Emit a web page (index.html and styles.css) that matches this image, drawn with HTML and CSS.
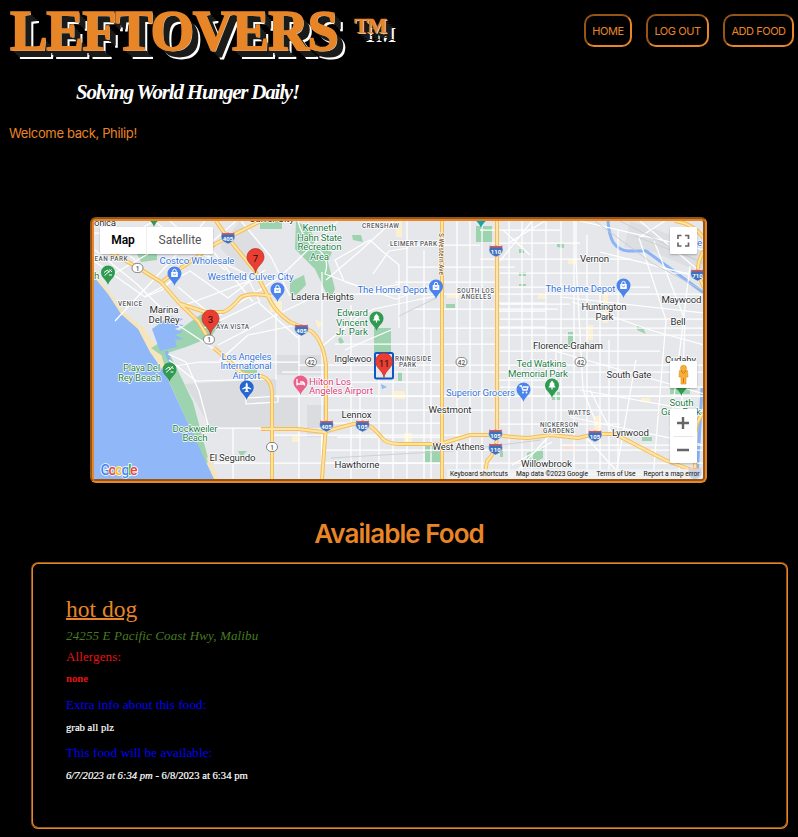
FILE: index.html
```html
<!DOCTYPE html>
<html lang="en">
<head>
<meta charset="utf-8">
<title>Leftovers</title>
<link rel="stylesheet" href="styles.css">
</head>
<body>
<header class="header">
  <div class="brand">
    <h1 class="logo">LEFTOVERS <span class="tm">TM</span></h1>
    <p class="tagline">Solving World Hunger Daily!</p>
  </div>
  <nav class="nav">
    <a class="nav-button home">HOME</a>
    <a class="nav-button logout">LOG OUT</a>
    <a class="nav-button add">ADD FOOD</a>
  </nav>
</header>
<p class="welcome">Welcome back, Philip!</p>

<section class="map">
<svg class="map-canvas" viewBox="94 221 610 258" width="610" height="258">
  <defs>
    <path id="pin" d="M0 0C-1.2-5-7-7.200-7-12.500A7 7 0 0 1 7-12.500C7-7.200 1.200-5 0 0Z"/>
    <g id="bag"><use href="#pin" fill="#4c84ee"/><rect x="-3.300" y="-14" width="6.600" height="5" rx=".6" fill="#fff"/><path d="M-1.700-14v-1a1.700 1.700 0 0 1 3.400 0v1" fill="none" stroke="#fff"/><path d="M-1.300-12.500a1.300 1.300 0 0 0 2.600 0" fill="none" stroke="#4c84ee" stroke-width=".8"/></g>
    <g id="tree"><use href="#pin" fill="#2f9b50"/><path d="M0-17.500l3 4h-1.300l2 3H.6v2H-.6v-2h-3.100l2-3H-3z" fill="#fff"/></g>
    <g id="beach"><use href="#pin" fill="#2f9b50"/><path d="M-4-12.500l3.500-2.500 1.500 2.500M-3.500-9.500l7-6M1-10h3M1.500-15.500l2.500 2.500" fill="none" stroke="#fff" stroke-width="1"/></g>
    <path id="marker" d="M0 0C-1-7-8.500-9.500-8.500-16A8.500 8.500 0 0 1 8.500-16C8.500-9.500 1-7 0 0Z" fill="#ea3e33" stroke="#b92d26" stroke-width=".7"/>
    <g id="shield"><path d="M-6-5h12q2 4 0 7Q4 4.500 0 6q-4-1.500-6-4-2-3 0-7z" fill="#3f70ba" stroke="#eef" stroke-width=".5"/><path d="M-6.300-5.400q3 1 6.300 0 3.300 1 6.300 0v2H-6.300z" fill="#d05a5c"/></g>
    <rect id="route" x="-5.500" y="-4.500" width="11" height="9" rx="4.500" fill="#fff" stroke="#777" stroke-width=".9"/>
  </defs>
  <rect x="94" y="221" width="610" height="258" fill="#e5e7ea"/>
  <path d="M185 384L276 379V398L298 398V428H211Z M307 405h18v32h-18z M275 355h50v20h-50z" fill="#dadce0"/>
  <path d="M630 221l74 25v28l-50-22-30-5z M240 221l25 30-20 26-25-30z" fill="#dcdee1"/>
  <path d="M94 271L108 289L126 314L145 329L160 353L175 378L201 439L219 479H94Z" fill="#f5e5bd"/>
  <path class="park" d="M151 348l20-12 36-26 14 12-10 15-25 10-25 8z M160 350l8 2 14 34 14 32 12 45-6-2-11-31-22-49z M296 221l14 8 8 18 14 5-4 10 7 27-5 12-15-32-20-20z M374 328l17 0v50h-17z M476 226h16v16h-16z M290 282l14-7 2 10-10 10-6-2z M260 221h22v8h-22z M135 250h22v10l-16 2z M425 445h17v18h-17z M527 453l16-6v11l-16 9z M557 244h7v4l-7-1z M519 249h5v4h-5z M519 272h7v4h-7z M519 284h7v2h-7z M446 304h9v4h-9z M568 332h5v15h-5z M637 325l6 3 3 6-9-4z M552 392h8v8h-8z M670 379h20v15h-20z M238 451h9l-6 6z M642 437h10v4h-10z M352 235h9l2 7-10-2z M338 339l3-2 3 5-4 3z M398 372h4v9h-4z M500 449h3v8h-3z M240 369h17v6h-17z"/>
  <path class="sand" d="M270 301h12v11h-12z M315 319l8 4-5 6z M568 259h8v5h-8z M538 295h8v4h-8z M603 293h5v30h-5z M588 325h5v15h-5z M394 391h11v8h-11z M641 398h9v4h-9z M594 416h7v15h-7z M447 295h12v3h-12z M292 436h7v6h-7z M404 433h8v13h-8z M396 219h6v18h-6z"/>
  <path d="M563 445h14v5h-14z" fill="#f7ded9"/>
  <path class="water" d="M94 277L108 294L121 314L138 329L150 352L166 375L181 408L198 445L214 479H94Z M152 329l18-13 13 3-8 5 9 1-9 4 8 3-8 3 9 4-9 1 2 7-17 4z M381 384l6 3-5 2z"/>
  <path class="park" d="M162 352l6-1 13 26 12 25 15 56-5-3-10-27-23-51z"/>
  <path class="river" d="M608 221Q609 235 613 242Q618 250 628 251L646 251L671 269L704 293M702 388L697 479M166 351l5 14"/>

  <g class="street">
    <path d="M94 233H102L135 260M94 261L145 297L162 290L200 252L236 221M111 247L154 221L195 251L245 273L260 302M115 273L160 247M144 297L190 271L228 298L265 270M158 314L196 301L260 277M170 221L225 270M205 221L170 262L115 321M178 287L215 318L280 277L338 221M204 328L258 302L298 338M218 345L268 319L320 294M95 250L137 284L178 325L235 363M241 221L271 257L290 296M197 230L222 263L253 302M219 361L248 335L292 326"/>
    <path d="M168 354L186 362L199 391L209 428H272M169 360L196 381L265 379M176 366L199 362H300M276 312V380M299 334V479M282 372H704M247 398l31-2v6l-32 2v-6M272 396H704M233 428V479M214 463H442M272 429h50v34"/>
    <path d="M322 272V479M351 305V479M379 378V479M407 221V479M424 250V479M457 221V479M470 221V479M482 221V479M509 221V479M522 221V479M532 221V479M546 221V479M561 221V479M574 221V479M587 235V479M600 260V479M618 230V479M639 238L666 320L653 479M654 241L685 320L679 479M690 266L670 430"/>
    <path d="M388 245H480M407 267H515M395 282H498M335 294H704M413 309H558M407 328H704M335 344H498M298 365H704M326 410H704M376 396H704M272 435H498M326 450H704M326 463H704M480 230H560M492 243H580M480 259H631M500 273H704M500 287H650M500 304H570M500 319H704M500 335H704M500 351H660M500 387H704M500 424H620M561 445H704M498 474H704"/>
    <path d="M298 221Q304 243 319 250Q330 260 325 274L344 281L396 299L442 282M326 280L360 251L393 221M344 281L335 260L370 240L382 251L399 265V328M373 274L389 251L408 248M391 330L370 339L345 350M320 348L358 317L374 309L436 296M345 282L370 290L400 284M500 261L532 221M510 242L545 221M503 230l27 25M576 221V260L583 390L595 420M561 297L704 313M572 302L650 330L704 345M600 252L704 278M580 221L704 250M640 221L704 275M638 238L665 221M548 349L704 394M580 390L704 412M570 417L704 445M614 437L590 390M584 435l40 44M550 435l-40 44M512 465l40-23"/>
    <path d="M498 303H545M498 311H545M498 327H545M337 382H442M326 423H442M337 437H442M360 394V463M393 380V479M431 328V479M556 348V430M609 340V479M636 360L615 479M498 380H545"/>
  </g>
  <g class="rail"><path d="M399 316L436 298M331 458l120-7 90-11M595 221l57 42 52 28M620 221l84 43M635 236l69 27"/></g>
  <g class="major-edge"><path id="roads" d="M101 247L137 267L161 282L180 304L198 321L210 341M214 348L235 366Q239 375 252 375Q272 374 272 394V479M181 304L205 312H223Q230 310 241 297Q250 292 271 296M163 281L215 244L261 221M216 221L228 238L255 271L271 302Q276 312 290 322L311 331Q323 340 326 365V425L322 479M261 429H298L323 432L353 424H364Q372 425 382 438Q387 444 400 444H440L470 435H498Q515 438 528 438L551 435L578 438L595 434H615L638 446L665 460L697 472M497 221V428Q498 451 487 461L484 479M442 221V479M675 221Q695 224 704 239M704 251Q697 261 698 274L704 288M704 413Q695 420 695 440V479"/></g>
  <use href="#roads" class="major"/>

  <g class="label place">
    <text x="94" y="226" textLength="22">onica</text><text x="249" y="222" textLength="45">Culver City</text>
    <text x="149.500" y="313" textLength="29">Marina</text><text x="148.500" y="323" textLength="31">Del Rey</text>
    <text x="291" y="300" textLength="63">Ladera Heights</text><text x="334.500" y="362" textLength="37">Inglewoo</text>
    <text x="341.500" y="417.500" textLength="30">Lennox</text><text x="428.500" y="412.500" textLength="43">Westmont</text><text x="432.500" y="450" textLength="52">West Athens</text>
    <text x="334.500" y="467.500" textLength="45">Hawthorne</text><text x="209.500" y="461" textLength="46">El Segundo</text>
    <text x="580" y="262" textLength="29">Vernon</text><text x="581.500" y="310" textLength="45">Huntington</text><text x="595.500" y="319.500" textLength="18">Park</text>
    <text x="661.500" y="303" textLength="40">Maywood</text><text x="670.500" y="324.500" textLength="15">Bell</text><text x="533" y="348.500" textLength="70">Florence-Graham</text>
    <text x="606.500" y="378" textLength="45">South Gate</text><text x="665" y="363" textLength="31">Cudahy</text><text x="612" y="435.500" textLength="37">Lynwood</text><text x="521" y="466.500" textLength="51">Willowbrook</text>
  </g>
  <g class="label park-name">
    <text x="302.500" y="231" textLength="34">Kenneth</text><text x="297" y="240.500" textLength="45">Hahn State</text><text x="297.500" y="250" textLength="44">Recreation</text><text x="310" y="259.500" textLength="19">Area</text>
    <text x="337" y="316" textLength="31">Edward</text><text x="336" y="325.500" textLength="32">Vincent</text><text x="336" y="334.500" textLength="32">Jr. Park</text>
    <text x="123" y="371" textLength="37">Playa Del</text><text x="118" y="380.500" textLength="43">Rey Beach</text><text x="172.500" y="432" textLength="45">Dockweiler</text><text x="182.500" y="441" textLength="25">Beach</text>
    <text x="516.500" y="367" textLength="50">Ted Watkins</text><text x="508" y="376.500" textLength="60">Memorial Park</text><text x="669.500" y="406" textLength="24">South</text><text x="661" y="415" textLength="40">Gate Park</text><text x="94" y="279">h</text>
  </g>
  <g class="label business">
    <text x="159.500" y="264" textLength="75">Costco Wholesale</text><text x="207.500" y="280" textLength="86">Westfield Culver City</text>
    <text x="357.500" y="293" textLength="70">The Home Depot</text><text x="545.500" y="291.500" textLength="70">The Home Depot</text><text x="446" y="396" textLength="69">Superior Grocers</text>
    <text x="221.500" y="360" textLength="50">Los Angeles</text><text x="220.500" y="369" textLength="51">International</text><text x="232.500" y="378.500" textLength="28">Airport</text><text x="697" y="246">el</text>
  </g>
  <g class="label hotel"><text x="309" y="384.500" textLength="42">Hilton Los</text><text x="309" y="394" textLength="64">Angeles Airport</text></g>
  <g class="label district">
    <text x="94.500" y="261" textLength="33">EAN PARK</text><text x="118" y="306" textLength="24">VENICE</text><text x="216" y="329" textLength="33">AYA VISTA</text>
    <text x="362" y="228" textLength="37">CRENSHAW</text><text x="390" y="246" textLength="47">LEIMERT PARK</text>
    <text x="457" y="293" textLength="37">SOUTH LOS</text><text x="461" y="299" textLength="30">ANGELES</text><text x="395" y="361" textLength="36">RNINGSIDE</text><text x="399" y="367" textLength="17">PARK</text>
    <text x="568" y="415" textLength="22">WATTS</text><text x="540" y="427" textLength="38">NICKERSON</text><text x="543" y="433" textLength="31">GARDENS</text>
    <text class="avenue" transform="translate(439 233) rotate(90)" textLength="42">S Western Ave</text>
  </g>

  <use href="#bag" x="174.500" y="286"/><use href="#bag" x="277.500" y="302"/><use href="#bag" x="436" y="299"/><use href="#bag" x="623.500" y="298"/>
  <use href="#pin" x="523.500" y="402" fill="#4c84ee"/><path d="M519.500 386h2l1.500 4h4l1-3h-5" fill="none" stroke="#fff" stroke-width="1.300"/><circle cx="523" cy="392.500" r=".9" fill="#fff"/><circle cx="526.500" cy="392.500" r=".9" fill="#fff"/>
  <use href="#tree" x="376.500" y="331"/><use href="#tree" x="552" y="398"/><use href="#tree" x="681.500" y="396"/>
  <use href="#beach" x="108" y="285"/><use href="#beach" x="169.500" y="382"/>
  <use href="#pin" x="154" y="227" fill="#2f9b50"/><use href="#pin" x="481" y="228" fill="#12a4af"/>
  <use href="#pin" x="246.700" y="400" fill="#2467d2"/><path d="M246.700 382.500l1 1.500v2.500l3.500 2v1l-3.500-1v2l1 1v.8l-2-.5-2 .5v-.8l1-1v-2l-3.500 1v-1l3.500-2V384z" fill="#fff"/>
  <use href="#pin" x="300.500" y="395" fill="#ec5f8c"/><path d="M297 379v6.500M297 384h7.500v1.500M300 382h2.500q1.500 0 1.500 1.500" fill="none" stroke="#fff" stroke-width="1.300"/>
  <g class="shields">
    <use href="#shield" x="228" y="238"/><text x="228" y="240.500">405</text><use href="#shield" x="301.500" y="330"/><text x="301.500" y="332.500">405</text>
    <use href="#shield" x="326.500" y="426"/><text x="326.500" y="428.500">405</text><use href="#shield" x="362.500" y="426"/><text x="362.500" y="428.500">105</text>
    <use href="#shield" x="496" y="251"/><text x="496" y="253.500">110</text><use href="#shield" x="495.500" y="435"/><text x="495.500" y="437.500">105</text><use href="#shield" x="495.500" y="449"/><text x="495.500" y="451.500">110</text>
    <use href="#shield" x="595" y="436"/><text x="595" y="438.500">105</text><use href="#shield" x="697.500" y="275"/><text x="697.500" y="277.500">710</text><use href="#shield" x="695" y="474"/>
  </g>
  <g class="routes">
    <use href="#route" x="137.500" y="268"/><text x="137.500" y="270.500">1</text><use href="#route" x="209" y="339.500"/><text x="209" y="342">1</text><use href="#route" x="272" y="447"/><text x="272" y="449.500">1</text>
    <use href="#route" x="311" y="362"/><text x="311" y="364.500">42</text><use href="#route" x="461.500" y="362"/><text x="461.500" y="364.500">42</text><use href="#route" x="580.500" y="362"/><text x="580.500" y="364.500">42</text>
  </g>
  <g class="markers">
    <use href="#marker" x="255.500" y="273"/><text x="255.500" y="262">7</text>
    <use href="#marker" x="210.500" y="334.500"/><text x="210.500" y="323">3</text>
    <rect x="375" y="353" width="18" height="25.500" rx="1.500" fill="#e5e7ea" stroke="#0b57c4" stroke-width="2"/>
    <use href="#marker" x="384" y="377.500"/><text x="384" y="366.500">11</text>
  </g>
  <text class="google" x="100.500" y="474.500" textLength="37"><tspan fill="#4285f4">G</tspan><tspan fill="#ea4335">o</tspan><tspan fill="#fbbc05">o</tspan><tspan fill="#4285f4">g</tspan><tspan fill="#34a853">l</tspan><tspan fill="#ea4335">e</tspan></text>
  <rect x="447" y="469" width="257" height="10" fill="#f2f3f4" opacity=".75"/>
  <g class="legal"><text x="450" y="476" textLength="58">Keyboard shortcuts</text><text x="516" y="476" textLength="72">Map data ©2023 Google</text><text x="596.500" y="476" textLength="39">Terms of Use</text><text x="643.500" y="476" textLength="56">Report a map error</text></g>
</svg>
  <div class="control map-type"><b>Map</b><span>Satellite</span></div>
  <div class="control fullscreen"><svg width="27" height="27"><path d="M8 12V8.500h3.500M15 8.500h3.500V12M18.500 15.500V19H15M11.500 19H8v-3.500" fill="none" stroke="#666" stroke-width="1.700"/></svg></div>
  <div class="control pegman"><svg width="27" height="27"><path d="M9.500 9.500h8l.5 6.500h-2v7h-5v-7H9z" fill="#f5b12f" stroke="#d8902b" stroke-width=".6"/><circle cx="13.500" cy="7.200" r="3" fill="#f5b12f" stroke="#d8902b" stroke-width=".6"/><path d="M11 10l2.500 2.500L16 10M13.500 17v5" fill="none" stroke="#e06e26"/></svg></div>
  <div class="control zoom"><svg width="27" height="54"><path d="M7 14h12M13 8v12M7 41h12" stroke="#666" stroke-width="2.400"/><path d="M3.500 27.500h20" stroke="#e6e6e6"/></svg></div>
</section>

<h2 class="section-title">Available Food</h2>
<article class="card">
  <h3 class="food-name">hot dog</h3>
  <p class="address">24255 E Pacific Coast Hwy, Malibu</p>
  <p class="field danger">Allergens:</p>
  <p class="value none">none</p>
  <p class="field info">Extra info about this food:</p>
  <p class="value">grab all plz</p>
  <p class="field info">This food will be available:</p>
  <p class="value"><em>6/7/2023 at 6:34 pm</em> - 6/8/2023 at 6:34 pm</p>
</article>
</body>
</html>
```
FILE: styles.css
```css
* { box-sizing: border-box; }
body { margin: 0; background: #000; color: #e88527; font-family: Inter, sans-serif; height: 837px; overflow: hidden; }
h1, h2, h3, p { margin: 0; font-weight: normal; }
.header { display: flex; justify-content: space-between; height: 122px; padding: 0 4px 0 10px; }
.brand { width: 400px; }
.logo { height: 74px; font: bold 56px/62px "Liberation Serif", serif; letter-spacing: -1.2px; white-space: nowrap; -webkit-text-stroke: 1.6px #e88527;
  text-shadow: 1px 1px 0 #d8d4cc, 3px 3px 0 #1b1c19, 5px 5px 0 #1b1c19, 7px 7px 0 #1b1c19, 9px 9px 0 #fff; }
.tm { margin-left: 4px; font-size: 21px; letter-spacing: -1px; vertical-align: 17px; line-height: 1; -webkit-text-stroke-width: .5px; }
.tagline { margin-left: 66px; font: italic bold 21px/36px "Liberation Serif", serif; color: #fff; letter-spacing: -1.2px; white-space: nowrap; }
.nav { display: flex; gap: 14px; padding-top: 14px; }
.nav-button { height: 33px; border: 2px inset #e88527; border-radius: 10px; font-size: 11px; line-height: 30px; letter-spacing: -.45px; text-align: center; white-space: nowrap; }
.home { width: 48px; }
.logout { width: 63px; }
.add { width: 71px; }
.welcome { height: 96px; padding-left: 9px; font-size: 13px; line-height: 23px; letter-spacing: -.35px; }

.map { position: relative; width: 617px; height: 266px; margin: -1px 0 0 90px; border: 4px groove #e88527; border-radius: 6px; overflow: hidden; background: #e5e7ea; }
.map-canvas { display: block; font-family: Roboto, sans-serif; }
.park { fill: #9dd3ae; }
.sand { fill: #fbf0cf; }
.water { fill: #90b7f7; }
.river { fill: none; stroke: #8ab4f5; stroke-width: 3; }
.street { fill: none; stroke: #fff; stroke-width: 1.25; stroke-linejoin: round; }
.rail { fill: none; stroke: #c7cacf; stroke-width: .8; }
.major-edge { fill: none; stroke: #f7bd53; stroke-width: 4; stroke-linejoin: round; }
.major { fill: none; stroke: #fde5a7; stroke-width: 2; stroke-linejoin: round; }
.label { paint-order: stroke; stroke: #fff; stroke-width: 1.5px; stroke-linejoin: round; font-size: 9.7px; }
.place { fill: #2c2e30; }
.park-name { fill: #238049; }
.business { fill: #3472d8; }
.hotel { fill: #d83c77; }
.district { font-size: 6.4px; fill: #555a60; font-weight: 500; }
.avenue { fill: #8a5a35; }
.shields, .routes { font-size: 6px; text-anchor: middle; font-weight: bold; fill: #fff; }
.routes { fill: #555; font-weight: 500; font-size: 6.5px; }
.markers { font-size: 9.5px; text-anchor: middle; fill: #111; }
.google { font: 500 14px Roboto, sans-serif; paint-order: stroke; stroke: #fff; stroke-width: 1.5px; }
.legal { font-size: 6.7px; fill: #111; }
.control { position: absolute; right: 6px; width: 27px; height: 27px; background: #fff; border-radius: 1px; box-shadow: 0 1px 2px #0004; color: #555; font: 12px/27px Roboto, sans-serif; }
.control svg { display: block; }
.map-type { top: 6px; left: 6px; width: 113px; display: flex; text-align: center; }
.map-type b { width: 47px; color: #000; font-weight: 600; border-right: 1px solid #eee; }
.map-type span { flex: 1; }
.fullscreen { top: 6px; }
.pegman { top: 140px; }
.zoom { top: 188px; height: 54px; }

.section-title { height: 79px; padding: 31px 0 0; font-size: 26px; font-weight: 600; line-height: 40px; text-align: center; letter-spacing: -.95px; }
.card { width: 757px; height: 267px; margin-left: 31px; padding: 32px 33px; border: 2px groove #e88527; border-radius: 7px; font-family: "Liberation Serif", serif; }
.food-name { height: 29px; font-size: 23.5px; line-height: 27px; text-decoration: underline; text-decoration-thickness: 2px; }
.address { font-size: 13px; line-height: 21px; font-style: italic; color: #487b20; letter-spacing: .14px; }
.field { font-size: 13px; line-height: 22px; letter-spacing: .12px; }
.danger { color: #e81313; }
.info { color: #00f; }
.value { height: 26px; font-size: 10.67px; line-height: 22px; color: #fff; -webkit-text-stroke: .2px; }
.none { color: #e81313; font-weight: bold; line-height: 20px; -webkit-text-stroke: 0; }
```
